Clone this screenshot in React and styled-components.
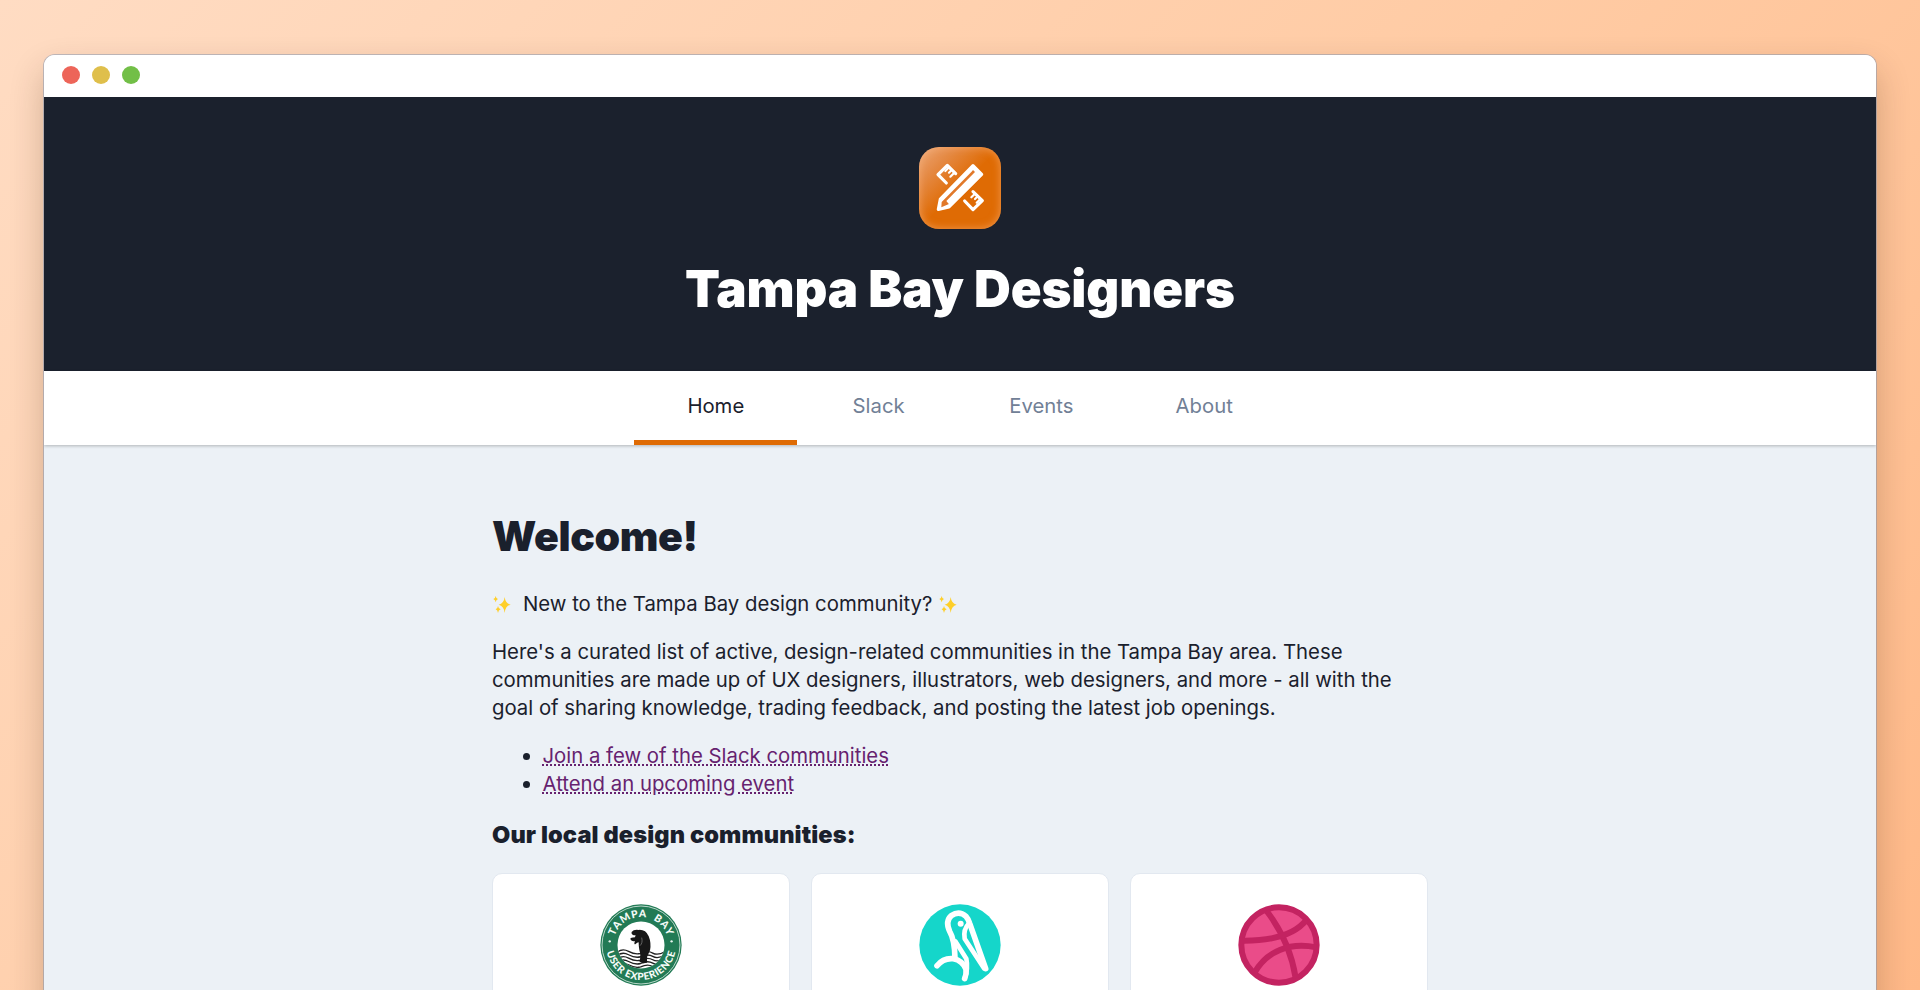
import React from "react";
import styled, { createGlobalStyle } from "styled-components";

const Global = createGlobalStyle`
  *, *::before, *::after { box-sizing: border-box; }
  html, body { margin: 0; height: 100%; overflow: hidden; }
  #root { height: 100%; }
  body { font-family: Inter, "Liberation Sans", sans-serif; color: #1a202c; }
`;

const Backdrop = styled.div`
  height: 990px;
  overflow: hidden;
  padding: 55px 44px 0;
  background: linear-gradient(135deg, #ffdcc3 0%, #ffcba4 52%, #ffb988 100%);
`;

const Window = styled.div`
  height: 1040px;
  border-radius: 11px 11px 0 0;
  overflow: hidden;
  background: #ecf1f6;
  box-shadow: 0 0 0 1px rgba(130, 150, 180, 0.5), 0 16px 34px rgba(60, 30, 10, 0.24);
`;

const TitleBar = styled.div`
  height: 42px;
  padding: 0 0 2px 17.5px;
  display: flex;
  align-items: center;
  gap: 12px;
  background: #fff;
`;

const Dot = styled.span`
  width: 18px;
  height: 18px;
  border-radius: 50%;
  background: ${(p) => p.$color};
`;

const Header = styled.header`
  height: 274px;
  padding-top: 50px;
  display: flex;
  flex-direction: column;
  align-items: center;
  background: #1b212d;
  color: #fff;
`;

const AppIcon = styled.div`
  width: 82px;
  height: 82px;
  border-radius: 20px;
  background: linear-gradient(135deg, #eda877 0%, #e58a45 22%, #df6b04 50%, #df6b04 100%);
  box-shadow: inset 0 0 8px rgba(255, 190, 140, 0.55);
`;

const Title = styled.h1`
  margin: 28px 0 0;
  font-size: 51px;
  line-height: 64px;
  font-weight: 900;
  letter-spacing: -0.1px;
`;

const Nav = styled.nav`
  height: 74px;
  display: flex;
  justify-content: center;
  position: relative;
  background: #fff;
  box-shadow: 0 1px 3px rgba(0, 0, 0, 0.25);
`;

const Tab = styled.a`
  width: 162.8px;
  padding-top: 21px;
  text-align: center;
  font-size: 20.3px;
  line-height: 28px;
  color: ${(p) => (p.$active ? "#1a202c" : "#718096")};
  border-bottom: 5px solid ${(p) => (p.$active ? "#df6b04" : "transparent")};
`;

const Main = styled.main`
  width: 936px;
  margin: 0 auto;
  padding-top: 63.5px;
`;

const Heading = styled.h2`
  margin: 0;
  font-size: 41px;
  line-height: 54px;
  font-weight: 900;
  letter-spacing: -0.4px;
`;

const Paragraph = styled.p`
  margin: ${(p) => p.$top}px 0 0;
  font-size: 20.34px;
  line-height: 28px;
  white-space: nowrap;
`;

const Links = styled.ul`
  margin: 20px 0 0;
  padding: 0 0 0 50.5px;
  font-size: 20.34px;
  line-height: 28px;
`;

const Link = styled.a`
  color: #66226f;
  text-decoration: underline dotted 1.5px;
`;

const Subheading = styled.h3`
  margin: 22px 0 0;
  font-size: 23.6px;
  line-height: 30px;
  font-weight: 900;
  letter-spacing: 0.1px;
`;

const Cards = styled.div`
  margin-top: 23px;
  display: grid;
  grid-template-columns: repeat(3, 1fr);
  gap: 20.5px;
`;

const Card = styled.article`
  height: 220px;
  padding-top: 30px;
  display: flex;
  justify-content: center;
  background: #fff;
  border: 1px solid #e2e8f0;
  border-radius: 10px;
`;

const Logo = styled.svg`
  display: block;
  width: 82px;
  height: 82px;
`;

const Spark = styled.svg`
  display: inline-block;
  width: 20px;
  height: 20px;
  vertical-align: -3px;
  margin-right: ${(p) => p.$gap || 0}px;
`;

const Sparkles = ({ gap }) => (
  <Spark viewBox="0 0 60 60" $gap={gap}>
    <g fill="#fecf2a">
      <path d="M38 9Q40 28 56 32Q40 36 38 57Q36 36 20 32Q36 28 38 9Z" />
      <path d="M11 6Q12 14 18 15Q12 17 11 25Q10 17 4 15Q10 14 11 6Z" />
      <path d="M18 36Q19 44 26 46Q19 48 18 57Q17 48 11 46Q17 44 18 36Z" />
    </g>
  </Spark>
);

const ToolsMark = () => (
  <Logo viewBox="57 51 246 246">
    <g fill="none" stroke="#fff" strokeWidth="9.5" strokeLinejoin="round" strokeLinecap="round">
      <path d="M139 159L114 134L142 106L167 131" />
      <path d="M194 213L219 239L247 212L219 185" />
      <path fill="#fff" d="M115 238L121 207L219 107L245 133L147 231Z" />
    </g>
    <g fill="none" stroke="#fff" strokeWidth="6.5" strokeLinecap="round">
      <path d="M147 112L136 123M155 120L147 128M163 128L151 140" />
      <path d="M225 191L214 202M233 199L225 207M241 207L230 218" />
    </g>
    <path d="M125 216L211 129Q216 124 219 120L225 126L139 213L147 222L124 232Z" fill="#e1792a" />
    <path d="M145 219L151 213" stroke="#fff" strokeWidth="6" />
  </Logo>
);

const UxMark = () => (
  <Logo viewBox="59 44 244 244">
    <circle cx="181" cy="166" r="121" fill="#227a55" />
    <circle cx="181" cy="166" r="116" fill="none" stroke="#d5e8df" strokeWidth="2.5" />
    <circle cx="181" cy="166" r="70" fill="#fff" />
    <defs>
      <path id="ux-top" d="M98 166A83 83 0 0 1 264 166" />
      <path id="ux-bottom" d="M77 166A104 104 0 0 0 285 166" />
      <clipPath id="ux-disc"><circle cx="181" cy="166" r="70" /></clipPath>
    </defs>
    <g fill="#f5fbf8" fontFamily="Lato, sans-serif" fontWeight="900" fontSize="31" textAnchor="middle">
      <text><textPath href="#ux-top" startOffset="50%" textLength="206">{"TAMPA\u00a0 BAY"}</textPath></text>
      <text fontSize="30"><textPath href="#ux-bottom" startOffset="50%" textLength="284">USER EXPERIENCE</textPath></text>
    </g>
    <circle cx="88" cy="155" r="3.5" fill="#e8f3ee" />
    <circle cx="272" cy="155" r="3.5" fill="#e8f3ee" />
    <g clipPath="url(#ux-disc)" fill="none" stroke="#222" strokeWidth="4">
      {[0, 10, 20, 30, 40].map((y) => (
        <path key={y} transform={`translate(0 ${y})`} d="M108 190Q124 174 144 185T180 191Q201 181 216 190T256 184" />
      ))}
    </g>
    <path d="M153 127Q160 118 175 121Q195 120 204 140Q212 160 208 181L199 202L199 218Q187 224 176 215Q182 200 176 180Q174 170 174 158Q170 158 164 164Q159 164 163 154Q154 157 149 148Q150 144 163 143L165 137Q151 137 153 127Z" fill="#171717" />
    <path d="M183 144Q187 160 178 168" fill="none" stroke="#888" strokeWidth="2" />
  </Logo>
);

const TealMark = () => (
  <Logo viewBox="57 43 246 246">
    <circle cx="180" cy="166" r="122" fill="#15d6ca" />
    <g fill="none" stroke="#fff" strokeWidth="17" strokeLinecap="round" strokeLinejoin="round">
      <path d="M111 228Q130 204 160 207Q188 212 198 239Q200 253 194 267" />
      <path d="M165 206Q164 150 149 125Q135 95 154 78Q177 62 198 80Q205 88 209 101L257 237" />
      <path d="M207 101Q189 119 194 147L252 236" strokeWidth="14" />
      <path d="M166 155L199 207Q205 235 194 267" strokeWidth="14" />
    </g>
    <circle cx="182" cy="102" r="9" fill="#fff" />
  </Logo>
);

const BallMark = () => (
  <Logo viewBox="56 43 246 246">
    <circle cx="179" cy="166" r="113" fill="#ea4c89" stroke="#c32361" strokeWidth="18" />
    <g fill="none" stroke="#c32361" strokeWidth="18">
      <path d="M142 64Q212 155 229 265" />
      <path d="M68 153C150 154 223 140 262 90" />
      <path d="M105 250C142 184 210 157 291 173" />
    </g>
  </Logo>
);

const tabs = ["Home", "Slack", "Events", "About"];

export default function App() {
  return (
    <>
      <Global />
      <Backdrop>
        <Window>
          <TitleBar>
            <Dot $color="#ed6559" />
            <Dot $color="#dfbf4b" />
            <Dot $color="#72bf47" />
          </TitleBar>
          <Header>
            <AppIcon><ToolsMark /></AppIcon>
            <Title>Tampa Bay Designers</Title>
          </Header>
          <Nav>
            {tabs.map((t, i) => <Tab key={t} $active={i === 0}>{t}</Tab>)}
          </Nav>
          <Main>
            <Heading>Welcome!</Heading>
            <Paragraph $top={27}>
              <Sparkles gap={11} />New to the Tampa Bay design community? <Sparkles />
            </Paragraph>
            <Paragraph $top={20.5}>
              Here's a curated list of active, design-related communities in the Tampa Bay area. These<br />
              communities are made up of UX designers, illustrators, web designers, and more - all with the<br />
              goal of sharing knowledge, trading feedback, and posting the latest job openings.
            </Paragraph>
            <Links>
              <li><Link>Join a few of the Slack communities</Link></li>
              <li><Link>Attend an upcoming event</Link></li>
            </Links>
            <Subheading>Our local design communities:</Subheading>
            <Cards>
              <Card><UxMark /></Card>
              <Card><TealMark /></Card>
              <Card><BallMark /></Card>
            </Cards>
          </Main>
        </Window>
      </Backdrop>
    </>
  );
}
